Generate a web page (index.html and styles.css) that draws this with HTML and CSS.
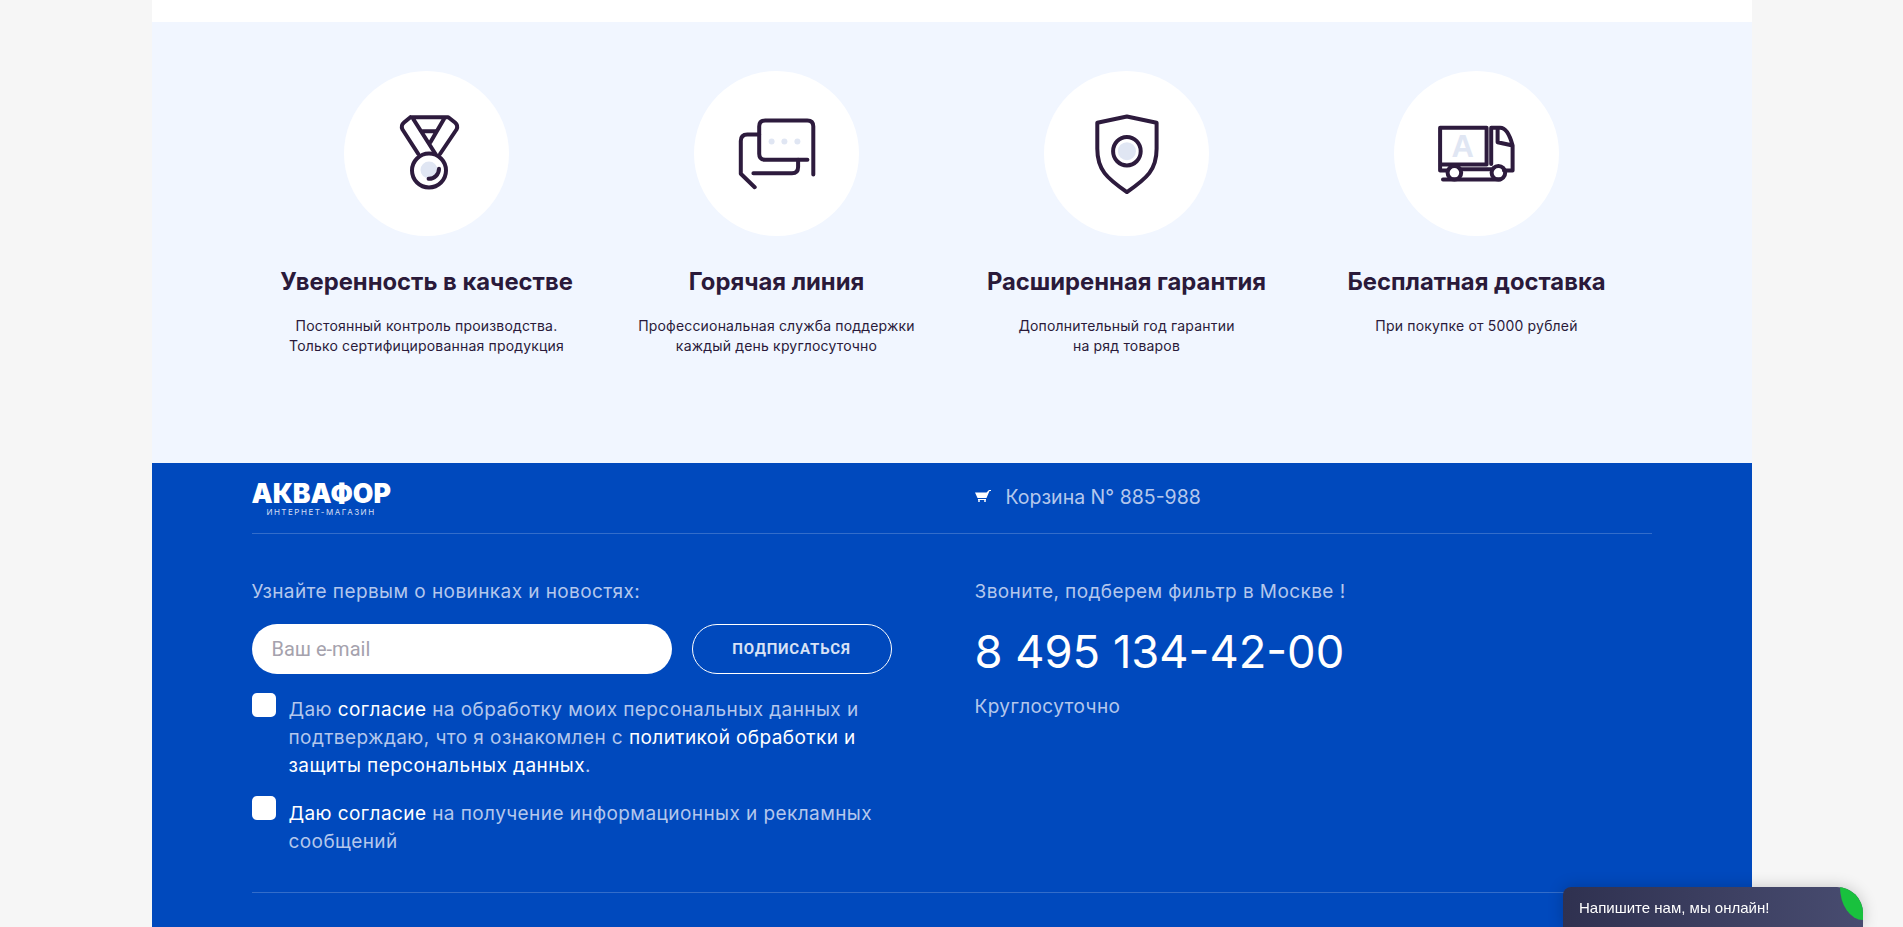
FILE: index.html
```html
<!DOCTYPE html>
<html lang="ru">
<head>
    <meta charset="UTF-8">
    <meta name="viewport" content="width=device-width, initial-scale=1.0">
    <title>Аквафор - интернет-магазин</title>
    <link rel="stylesheet" href="styles.css">
</head>
<body>
    <div class="page">
        <section class="features">
            <div class="feature">
                <div class="feature-icon">
                    <svg class="icon" viewBox="0 0 80 80">
                        <circle class="tint" cx="42" cy="56" r="8.5"/>
                        <path class="line" d="M23.4 3.2H61.3L68 8.5Q71.5 11.5 69.5 15.5L53 40M23.4 3.2L17 8.5Q13.5 11.5 15.5 15.5L31.3 40M26.1 4.8L48.5 40M57.1 4.8L43.4 28.2M34.8 17.2H48.5"/>
                        <circle class="line" cx="42" cy="56.5" r="17"/>
                        <path class="line" d="M52 54.8A10 10 0 0 1 41.6 64.8"/>
                    </svg>
                </div>
                <h3 class="feature-title">Уверенность в качестве</h3>
                <p class="feature-text">Постоянный контроль производства.<br>Только сертифицированная продукция</p>
            </div>
            <div class="feature">
                <div class="feature-icon">
                    <svg class="icon" viewBox="0 0 80 80">
                        <circle class="tint" cx="34.6" cy="27.5" r="3"/>
                        <circle class="tint" cx="47.4" cy="27.5" r="3"/>
                        <circle class="tint" cx="60.4" cy="27.5" r="3"/>
                        <path class="line" d="M76.3 60.5V12.5Q76.3 6.5 70.3 6.5H28.2Q22.2 6.5 22.2 12.5V39.8Q22.2 45.8 28.2 45.8H70.4"/>
                        <path class="line" d="M22.2 20.5H10.3Q3.8 20.5 3.8 27V59.8L17.7 73.2M16.4 59.2H55Q61.1 59.2 61.1 53V45.8"/>
                    </svg>
                </div>
                <h3 class="feature-title">Горячая линия</h3>
                <p class="feature-text">Профессиональная служба поддержки<br>каждый день круглосуточно</p>
            </div>
            <div class="feature">
                <div class="feature-icon">
                    <svg class="icon" viewBox="0 0 80 80">
                        <circle class="tint" cx="39.9" cy="37.2" r="9"/>
                        <path class="line" d="M39.9 2.5L69.6 8.8V34.8C69.6 56 60 64 39.9 78.2C19.8 64 10.3 56 10.3 34.8V8.8Z"/>
                        <ellipse class="line" cx="39.9" cy="37.2" rx="13.8" ry="14.2"/>
                    </svg>
                </div>
                <h3 class="feature-title">Расширенная гарантия</h3>
                <p class="feature-text">Дополнительный год гарантии<br>на ряд товаров</p>
            </div>
            <div class="feature">
                <div class="feature-icon">
                    <svg class="icon" viewBox="0 0 80 80">
                        <text class="truck-letter" x="25.6" y="42.5">A</text>
                        <path class="line" d="M3.1 13.8H49.6V50.5H3.1ZM54.2 50V13.8H63.2C69 13.8 72.5 20 75.6 31.5V56.5H67M60.6 13.8V28.2L75.6 31.5M3.1 50.5V56.5H10M24 55.2H54.2M6 65.5H63.2"/>
                        <circle class="line" cx="17.4" cy="58.8" r="6.8"/>
                        <circle class="line" cx="61.4" cy="58.8" r="6.8"/>
                    </svg>
                </div>
                <h3 class="feature-title">Бесплатная доставка</h3>
                <p class="feature-text">При покупке от 5000 рублей</p>
            </div>
        </section>

        <footer class="footer">
            <div class="footer-top">
                <div class="footer-col">
                    <div class="logo">
                        <div class="logo-name">АКВАФОР</div>
                        <div class="logo-sub">ИНТЕРНЕТ-МАГАЗИН</div>
                    </div>
                </div>
                <div class="footer-col cart-row">
                    <svg class="cart-icon" viewBox="0 0 16 12">
                        <path d="M0 2.5H11.5L14 0H16V1H14.5L11.5 8H2.5ZM3 9H11V10H3Z"/>
                        <circle cx="4" cy="11" r="1"/>
                        <circle cx="10" cy="11" r="1"/>
                    </svg>
                    <span>Корзина N° 885-988</span>
                </div>
            </div>

            <div class="footer-main">
                <div class="footer-col">
                    <p class="lead">Узнайте первым о новинках и новостях:</p>
                    <form class="subscribe">
                        <input type="text" class="email-input" placeholder="Ваш e-mail">
                        <button type="button" class="subscribe-btn">Подписаться</button>
                    </form>
                    <label class="agree">
                        <span class="checkbox"></span>
                        <span class="agree-text">Даю <a href="#">согласие</a> на обработку моих персональных данных и подтверждаю, что я ознакомлен с <a href="#">политикой обработки и защиты персональных данных</a>.</span>
                    </label>
                    <label class="agree">
                        <span class="checkbox"></span>
                        <span class="agree-text"><a href="#">Даю согласие</a> на получение информационных и рекламных сообщений</span>
                    </label>
                </div>
                <div class="footer-col">
                    <p class="lead">Звоните, подберем фильтр в Москве !</p>
                    <div class="phone">8 495 134-42-00</div>
                    <p class="hours">Круглосуточно</p>
                </div>
            </div>
        </footer>
    </div>

    <div class="chat-label">Напишите нам, мы онлайн!</div>
</body>
</html>
```

FILE: styles.css
```css
body {
    margin: 0;
    background-color: #f6f6f6;
    font-family: Inter, "Noto Sans", sans-serif;
}
.page {
    width: 1600px;
    height: 927px;
    margin: 0 auto;
    padding-top: 22px;
    background-color: #fff;
    box-sizing: border-box;
    overflow: hidden;
}
.features {
    display: grid;
    grid-template-columns: repeat(4, 350px);
    height: 441px;
    padding: 49px 100px 0;
    box-sizing: border-box;
    background-color: #f1f6ff;
}
.feature {
    text-align: center;
    color: #2a1a3a;
}
.feature-icon {
    width: 165px;
    height: 165px;
    margin: 0 auto 30px;
    display: flex;
    align-items: center;
    justify-content: center;
    border-radius: 50%;
    background-color: #fff;
}
.icon {
    width: 80px;
    height: 80px;
}
.line {
    fill: none;
    stroke: #2d1b3d;
    stroke-width: 4;
    stroke-linecap: round;
    stroke-linejoin: round;
}
.tint {
    fill: #e0e6f3;
}
.truck-letter {
    fill: #e0e6f3;
    font-family: "Liberation Sans", sans-serif;
    font-size: 31px;
    font-weight: 700;
    text-anchor: middle;
}
.feature-title {
    margin: 0 0 19px;
    font-size: 23.8px;
    line-height: 31px;
    font-weight: 700;
}
.feature-text {
    margin: 0;
    font-size: 14px;
    line-height: 20px;
    letter-spacing: 0.18px;
}
.footer {
    height: 100%;
    padding: 0 100px;
    background-color: #0049bd;
    color: #b4c7ec;
}
.footer-top {
    display: grid;
    grid-template-columns: 723px 1fr;
    height: 71px;
    box-sizing: border-box;
    border-bottom: 1px solid rgba(255, 255, 255, 0.2);
}
.logo {
    width: 139px;
    padding-top: 18px;
    text-align: center;
}
.logo-name {
    font-size: 26.6px;
    line-height: 24px;
    font-weight: 900;
    color: #fff;
    white-space: nowrap;
}
.logo-sub {
    margin-top: 2px;
    font-size: 8px;
    line-height: 10px;
    letter-spacing: 1.5px;
    color: #d5dff3;
    white-space: nowrap;
}
.cart-row {
    display: flex;
    align-items: center;
    gap: 15px;
    padding-bottom: 2px;
    font-size: 19.5px;
}
.cart-icon {
    width: 16px;
    height: 12px;
    margin-bottom: 3px;
    fill: #fff;
}
.footer-main {
    display: grid;
    grid-template-columns: 723px 1fr;
    height: 359px;
    box-sizing: border-box;
    border-bottom: 1px solid rgba(255, 255, 255, 0.2);
}
.lead {
    margin: 46px 0 20px;
    font-size: 19px;
    line-height: 24px;
    letter-spacing: 0.42px;
}
.subscribe {
    display: flex;
    gap: 20px;
    width: 640px;
    margin-bottom: 19px;
}
.email-input {
    width: 420px;
    height: 50px;
    padding: 0 20px;
    box-sizing: border-box;
    border: 0;
    border-radius: 25px;
    background-color: #fff;
    font-family: Roboto, sans-serif;
    font-size: 20px;
}
.email-input::placeholder {
    color: #a5a2ad;
}
.subscribe-btn {
    width: 200px;
    height: 50px;
    border: 1px solid #fff;
    border-radius: 25px;
    background: none;
    color: #d8e2f5;
    font-family: Roboto, sans-serif;
    font-size: 15px;
    font-weight: 700;
    letter-spacing: 0.8px;
    text-transform: uppercase;
}
.agree {
    display: flex;
    gap: 13px;
    width: 640px;
    margin-bottom: 16px;
    font-size: 19px;
    line-height: 28px;
    letter-spacing: 0.42px;
}
.agree-text {
    padding-top: 3px;
}
.agree + .agree .agree-text {
    padding-top: 4px;
}
.agree a {
    color: #fff;
    text-decoration: none;
}
.checkbox {
    flex: none;
    width: 24px;
    height: 24px;
    border-radius: 5px;
    background-color: #fff;
}
.phone {
    font-size: 45.3px;
    line-height: 60px;
    color: #fff;
    margin-top: -2px;
}
.hours {
    margin: 13px 0 0;
    font-size: 19px;
    line-height: 24px;
    letter-spacing: 0.42px;
}
.chat-label {
    position: fixed;
    left: 1563px;
    top: 887px;
    width: 300px;
    height: 40px;
    padding: 12px 16px 0;
    box-sizing: border-box;
    overflow: hidden;
    border-radius: 8px 26px 0 0;
    background: linear-gradient(90deg, #2f3150, #484c70);
    box-shadow: 0 0 16px rgba(0, 0, 0, 0.2);
    color: #fff;
    font-family: "Liberation Sans", sans-serif;
    font-size: 15px;
    line-height: 17px;
}
.chat-label::after {
    content: "";
    position: absolute;
    top: -33px;
    right: -23px;
    width: 46px;
    height: 66px;
    border-radius: 50%;
    background-color: #19c13e;
}
```
